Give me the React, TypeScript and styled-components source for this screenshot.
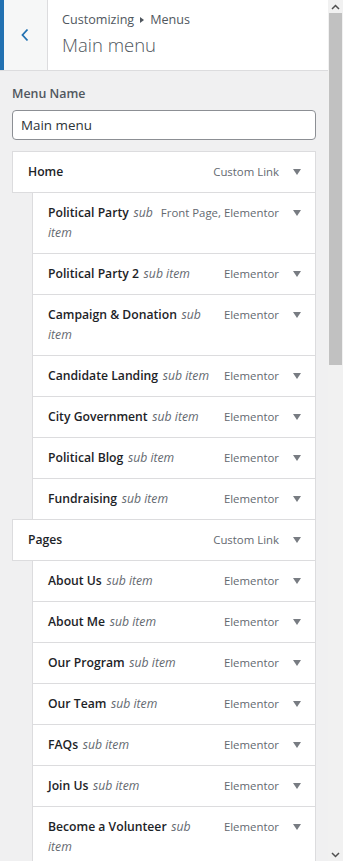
import styled, { createGlobalStyle } from 'styled-components';

const GlobalStyle = createGlobalStyle`
  html, body {
    margin: 0;
    padding: 0;
    background: #f0f0f1;
  }
  body {
    font-family: "Open Sans", "Noto Sans", sans-serif;
    color: #1d2327;
  }
  * {
    box-sizing: border-box;
  }
`;

const Frame = styled.div`
  display: flex;
  height: 861px;
  width: 343px;
  overflow: hidden;
`;

const Panel = styled.div`
  flex: 1;
  min-width: 0;
  overflow: hidden;
  background: #f0f0f1;
`;

const Header = styled.div`
  display: flex;
  height: 71px;
  background: #fff;
  border-bottom: 1px solid #dcdcde;
`;

const BackButton = styled.button`
  width: 48px;
  flex: none;
  border: none;
  border-left: 4px solid #2271b1;
  border-right: 1px solid #dcdcde;
  background: #f6f7f7;
  display: flex;
  align-items: center;
  justify-content: center;
  padding: 0 2px 0 0;
  cursor: pointer;
`;

const HeaderText = styled.div`
  padding: 10px 0 0 14px;
  display: flex;
  flex-direction: column;
`;

const Crumbs = styled.div`
  font-size: 12.6px;
  line-height: 20px;
  color: #50575e;
  display: flex;
  align-items: center;
  gap: 6px;
`;

const CrumbArrow = styled.span`
  width: 0;
  height: 0;
  border-top: 3px solid transparent;
  border-bottom: 3px solid transparent;
  border-left: 4px solid #50575e;
`;

const PanelTitle = styled.div`
  font-size: 18.5px;
  font-weight: 300;
  line-height: 30px;
  color: #50575e;
`;

const Body = styled.div`
  padding: 13px 12px 0;
`;

const Label = styled.div`
  font-size: 12.4px;
  font-weight: 600;
  line-height: 20px;
  color: #50575e;
`;

const NameInput = styled.input`
  display: block;
  width: 100%;
  height: 30px;
  margin-top: 6px;
  padding: 0 8px;
  border: 1px solid #8c8f94;
  border-radius: 4px;
  font-family: inherit;
  font-size: 13.4px;
  color: #2c3338;
  background: #fff;
`;

const MenuList = styled.ul`
  list-style: none;
  margin: 11px 0 0;
  padding: 0;
`;

const Item = styled.li<{ $depth: number }>`
  display: flex;
  align-items: flex-start;
  margin-top: -1px;
  margin-left: ${(p) => p.$depth * 20}px;
  padding: 10px 8px 10px 15px;
  background: #fff;
  border: 1px solid #dcdcde;
  line-height: 20px;
  &:first-child {
    margin-top: 0;
  }
`;

const Title = styled.div`
  flex: 1;
  min-width: 0;
  font-size: 12.2px;
  font-weight: 600;
  color: #1d2327;
`;

const SubNote = styled.span`
  font-style: italic;
  font-weight: 400;
  color: #646970;
  margin-left: 1.5px;
`;

const ItemType = styled.span`
  flex: none;
  margin-left: 7px;
  font-size: 11.4px;
  color: #646970;
  white-space: nowrap;
`;

const Toggle = styled.span`
  flex: none;
  width: 20px;
  height: 20px;
  margin-left: 8px;
  display: flex;
  align-items: center;
  justify-content: center;
  &::after {
    content: '';
    border-left: 4px solid transparent;
    border-right: 4px solid transparent;
    border-top: 6px solid #787c82;
  }
`;

const Scrollbar = styled.div`
  width: 15px;
  flex: none;
  display: flex;
  flex-direction: column;
  background: #f1f1f1;
`;

const ScrollArrow = styled.div`
  height: 13px;
  display: flex;
  align-items: center;
  justify-content: center;
`;

const Track = styled.div`
  flex: 1;
  padding: 0 1px;
`;

const Thumb = styled.div`
  height: 352px;
  background: #c1c1c1;
`;

const items: { title: string; type: string; depth: number; sub?: boolean }[] = [
  { title: 'Home', type: 'Custom Link', depth: 0 },
  { title: 'Political Party', type: 'Front Page, Elementor', depth: 1, sub: true },
  { title: 'Political Party 2', type: 'Elementor', depth: 1, sub: true },
  { title: 'Campaign & Donation', type: 'Elementor', depth: 1, sub: true },
  { title: 'Candidate Landing', type: 'Elementor', depth: 1, sub: true },
  { title: 'City Government', type: 'Elementor', depth: 1, sub: true },
  { title: 'Political Blog', type: 'Elementor', depth: 1, sub: true },
  { title: 'Fundraising', type: 'Elementor', depth: 1, sub: true },
  { title: 'Pages', type: 'Custom Link', depth: 0 },
  { title: 'About Us', type: 'Elementor', depth: 1, sub: true },
  { title: 'About Me', type: 'Elementor', depth: 1, sub: true },
  { title: 'Our Program', type: 'Elementor', depth: 1, sub: true },
  { title: 'Our Team', type: 'Elementor', depth: 1, sub: true },
  { title: 'FAQs', type: 'Elementor', depth: 1, sub: true },
  { title: 'Join Us', type: 'Elementor', depth: 1, sub: true },
  { title: 'Become a Volunteer', type: 'Elementor', depth: 1, sub: true },
];

const App = () => {
  return (
    <>
      <GlobalStyle />
      <Frame>
        <Panel>
          <Header>
            <BackButton aria-label="Back">
              <svg width="10" height="16" viewBox="0 0 10 16">
                <path d="M7.5 2.5 L2.5 8 L7.5 13.5" fill="none" stroke="#2271b1" strokeWidth="1.8" />
              </svg>
            </BackButton>
            <HeaderText>
              <Crumbs>
                Customizing <CrumbArrow /> Menus
              </Crumbs>
              <PanelTitle>Main menu</PanelTitle>
            </HeaderText>
          </Header>
          <Body>
            <Label>Menu Name</Label>
            <NameInput defaultValue="Main menu" />
            <MenuList>
              {items.map((item) => (
                <Item key={item.title} $depth={item.depth}>
                  <Title>
                    {item.title}{' '}
                    {item.sub && <SubNote>sub item</SubNote>}
                  </Title>
                  <ItemType>{item.type}</ItemType>
                  <Toggle />
                </Item>
              ))}
            </MenuList>
          </Body>
        </Panel>
        <Scrollbar>
          <ScrollArrow>
            <svg width="9" height="6" viewBox="0 0 9 6">
              <path d="M1 5 L4.5 1.5 L8 5" fill="none" stroke="#505050" strokeWidth="1.5" />
            </svg>
          </ScrollArrow>
          <Track>
            <Thumb />
          </Track>
          <ScrollArrow>
            <svg width="9" height="6" viewBox="0 0 9 6">
              <path d="M1 1 L4.5 4.5 L8 1" fill="none" stroke="#505050" strokeWidth="1.5" />
            </svg>
          </ScrollArrow>
        </Scrollbar>
      </Frame>
    </>
  );
};

export default App;
